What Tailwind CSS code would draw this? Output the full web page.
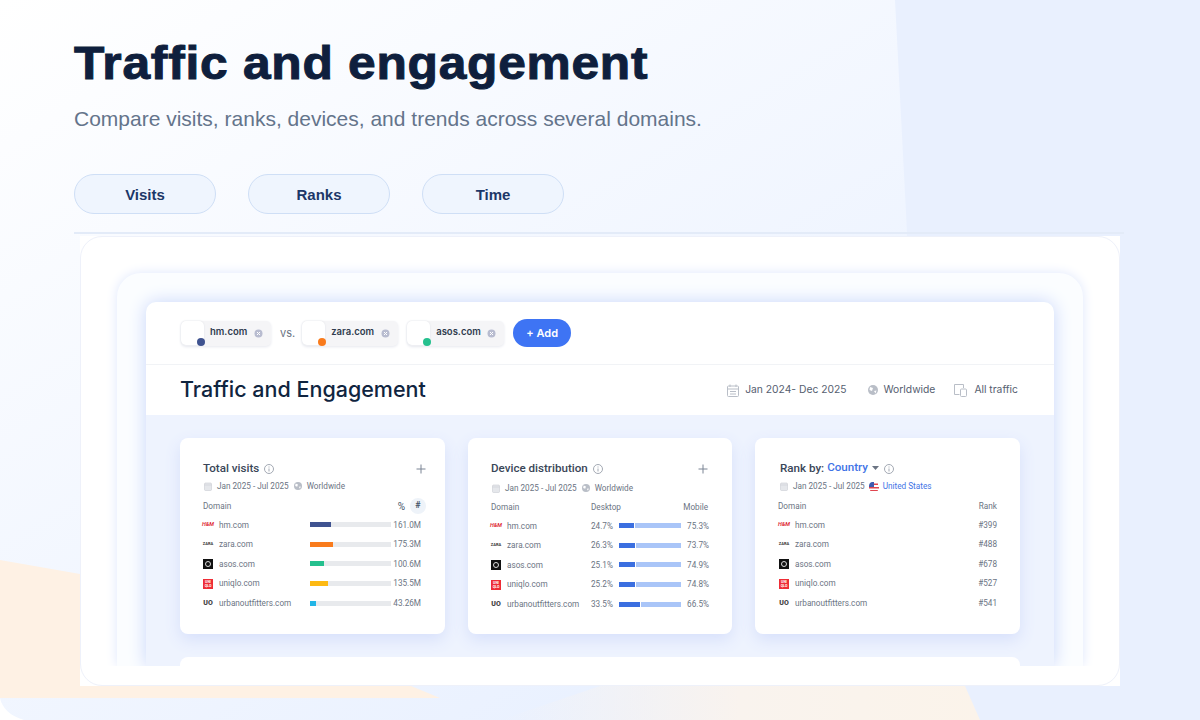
<!DOCTYPE html>
<html lang="en">
<head>
  <meta charset="UTF-8">
  <meta name="viewport" content="width=device-width, initial-scale=1.0">
  <title>Traffic and engagement</title>
  <script src="https://cdn.jsdelivr.net/npm/@tailwindcss/browser@4"></script>
</head>
<body class="relative w-[1200px] h-[720px] overflow-hidden bg-linear-to-br from-white to-[#e2ecff] font-['Roboto',sans-serif]">
  <!-- background shapes -->
  <svg class="absolute inset-0" width="1200" height="720" viewBox="0 0 1200 720">
    <defs>
      <linearGradient id="peach" x1="0" x2="1" y1="0" y2="0">
        <stop offset="0" stop-color="#f9f3ee" stop-opacity="0"/>
        <stop offset="0.5" stop-color="#f9f3ee"/>
        <stop offset="1" stop-color="#fbf3ea"/>
      </linearGradient>
    </defs>
    <path d="M895 0H1200V720H908L907 232Z" fill="#e9f0fe"/>
    <path d="M0 560L120 581L300 640L440 698H0Z" fill="#fef1e4"/>
    <path d="M600 686H965L980 720H500Z" fill="url(#peach)"/>
    <path d="M0 698V720H24C10 716 2 708 0 698Z" fill="#ffffff"/>
  </svg>

  <div class="relative pl-[74px]">
    <h1 class="w-[533px] whitespace-nowrap pt-[36px] h-[88px] origin-left scale-x-[1.08] font-['Liberation_Sans',sans-serif] font-bold text-[46px] leading-[54px] tracking-[0.7px] text-[#0f1f3d] [-webkit-text-stroke:1px_#0f1f3d]">Traffic and engagement</h1>
    <p class="mt-[17px] font-['Liberation_Sans',sans-serif] text-[21px] leading-[27px] text-[#64748b]">Compare visits, ranks, devices, and trends across several domains.</p>

    <div class="mt-[42px] flex gap-[32px]">
      <button class="w-[142px] h-[40px] pt-[2px] rounded-[20px] border border-[#cfdff6] bg-[#eff5fe] font-['Liberation_Sans',sans-serif] font-bold text-[15px] text-[#1c3768]">Visits</button>
      <button class="w-[142px] h-[40px] pt-[2px] rounded-[20px] border border-[#cfdff6] bg-[#eff5fe] font-['Liberation_Sans',sans-serif] font-bold text-[15px] text-[#1c3768]">Ranks</button>
      <button class="w-[142px] h-[40px] pt-[2px] rounded-[20px] border border-[#cfdff6] bg-[#eff5fe] font-['Liberation_Sans',sans-serif] font-bold text-[15px] text-[#1c3768]">Time</button>
    </div>

    <div class="mt-[18px] w-[1050px] h-[2px] bg-[#e3ebf8]"></div>

    <!-- screenshot frame -->
    <div class="mt-[2px] ml-[6px] w-[1040px] h-[450px] bg-white">
      <div class="w-full h-full rounded-[22px] border border-[#eef1fa] pt-[36px] px-[36px]">
        <div class="w-[966px] h-[393px] rounded-t-[24px] bg-[#fbfdff] shadow-[0_0_12px_#dfe7fc] pt-[29px] px-[29px] [clip-path:inset(-30px_-30px_0_-30px)]">
          <div class="w-[908px] h-[364px] rounded-t-[10px] overflow-hidden bg-white shadow-[0_0_18px_#c8d6fa]">

            <!-- domain bar -->
            <div class="h-[63px] border-b border-[#f1f3f6] pl-[35px] pt-[17px] flex items-start font-['Inter',sans-serif]">
              <div id="chips" class="flex items-center h-[28px]"></div>
              <button class="ml-[9px] w-[58px] h-[28px] rounded-full bg-[#3e74f4] text-white text-[11px] font-semibold">+ Add</button>
            </div>

            <!-- page title -->
            <div class="h-[50px] pl-[34px] pr-[36px] flex items-center justify-between font-['Inter',sans-serif]">
              <h2 class="pb-[2px] text-[21.5px] font-medium text-[#10253f]">Traffic and Engagement</h2>
              <div class="flex items-center text-[10.3px] text-[#566070]">
                <svg class="mr-[6px]" width="12" height="13" viewBox="0 0 12 13" fill="none" stroke="#b9bec7"><rect x="0.5" y="2" width="11" height="10.5" rx="1"/><path d="M0.5 5H11.5M3 0.5V3M9 0.5V3M3 7.5H9M3 10H9"/></svg>
                <span>Jan 2024- Dec 2025</span>
                <svg class="ml-[21px] mr-[6px]" width="10" height="10" viewBox="0 0 10 10"><circle cx="5" cy="5" r="5" fill="#b9bec7"/><path d="M2 2L5 3L4 6L1.5 5ZM6 6L8.5 5.5L7.5 8.5Z" fill="#fff"/></svg>
                <span>Worldwide</span>
                <svg class="ml-[19px] mr-[7px]" width="13" height="13" viewBox="0 0 13 13" fill="none" stroke="#b9bec7"><path d="M5.5 10.5H0.5V0.5H9.5V4"/><rect x="6.5" y="5" width="6" height="7.5" rx="1"/></svg>
                <span>All traffic</span>
              </div>
            </div>

            <!-- widgets -->
            <div class="h-[251px] bg-[#eef3fe] pl-[34px] pt-[23px]">
              <div class="flex gap-[23px]">
                <div class="w-[265px] h-[196px] rounded-[8px] bg-white shadow-[0_6px_16px_#d7e0fb] px-[23px] pt-[21px]">
                  <div class="flex items-center h-[20px] text-[11.6px] font-medium text-[#3a4658]">
                    Total visits
                    <svg class="ml-[5px]" width="10" height="10" viewBox="0 0 10 10" fill="none" stroke="#a3a9b3"><circle cx="5" cy="5" r="4.5"/><path d="M5 4.5V7.5M5 2.5V3.5"/></svg>
                    <svg class="ml-auto mr-[-4px]" width="10" height="10" viewBox="0 0 10 10" stroke="#7b8494"><path d="M5 0.5V9.5M0.5 5H9.5"/></svg>
                  </div>
                  <div class="flex items-center h-[14px] text-[8.2px] text-[#6b7483]">
                    <svg class="ml-[1px] mr-[5px]" width="8" height="9" viewBox="0 0 8 9" fill="#e5e7eb" stroke="#c9cdd4" stroke-width="0.6"><rect x="0.5" y="1" width="7" height="7.5" rx="1"/><path d="M0.5 3H7.5"/></svg>
                    <span>Jan 2025 - Jul 2025</span>
                    <svg class="ml-[5px] mr-[5px]" width="8" height="8" viewBox="0 0 10 10"><circle cx="5" cy="5" r="5" fill="#b9bec7"/><path d="M2 2L5 3L4 6L1.5 5ZM6 6L8.5 5.5L7.5 8.5Z" fill="#fff"/></svg>
                    <span>Worldwide</span>
                  </div>
                  <div class="mt-[3px] h-[20px] flex items-center text-[8.2px] text-[#6b7483]">
                    <span>Domain</span>
                    <span class="ml-auto text-[10px] text-[#475569]">%</span>
                    <span class="ml-[5px] mr-[-4px] w-[16px] h-[16px] rounded-full bg-[#eef3f9] flex items-center justify-center text-[9px] font-bold text-[#475569]">#</span>
                  </div>
                  <div id="visits" class="mt-[-1px]"></div>
                </div>

                <div class="w-[264px] h-[196px] rounded-[8px] bg-white shadow-[0_6px_16px_#d7e0fb] px-[23px] pt-[21px]">
                  <div class="flex items-center h-[20px] text-[11.6px] font-medium text-[#3a4658]">
                    Device distribution
                    <svg class="ml-[5px]" width="10" height="10" viewBox="0 0 10 10" fill="none" stroke="#a3a9b3"><circle cx="5" cy="5" r="4.5"/><path d="M5 4.5V7.5M5 2.5V3.5"/></svg>
                    <svg class="ml-auto mr-[1px]" width="10" height="10" viewBox="0 0 10 10" stroke="#7b8494"><path d="M5 0.5V9.5M0.5 5H9.5"/></svg>
                  </div>
                  <div class="mt-[2px] flex items-center h-[14px] text-[8.2px] text-[#6b7483]">
                    <svg class="ml-[1px] mr-[5px]" width="8" height="9" viewBox="0 0 8 9" fill="#e5e7eb" stroke="#c9cdd4" stroke-width="0.6"><rect x="0.5" y="1" width="7" height="7.5" rx="1"/><path d="M0.5 3H7.5"/></svg>
                    <span>Jan 2025 - Jul 2025</span>
                    <svg class="ml-[5px] mr-[5px]" width="8" height="8" viewBox="0 0 10 10"><circle cx="5" cy="5" r="5" fill="#b9bec7"/><path d="M2 2L5 3L4 6L1.5 5ZM6 6L8.5 5.5L7.5 8.5Z" fill="#fff"/></svg>
                    <span>Worldwide</span>
                  </div>
                  <div class="mt-[2px] h-[20px] flex items-center text-[8.2px] text-[#6b7483]">
                    <span class="w-[100px]">Domain</span>
                    <span>Desktop</span>
                    <span class="ml-auto mr-[1px]">Mobile</span>
                  </div>
                  <div id="devices" class="mt-[-1px]"></div>
                </div>

                <div class="w-[265px] h-[196px] rounded-[8px] bg-white shadow-[0_6px_16px_#d7e0fb] px-[24px] pt-[21px]">
                  <div class="ml-[1px] flex items-center h-[20px] text-[11.6px] font-medium text-[#3a4658]">
                    <span>Rank by:</span>
                    <span class="ml-[3px] mt-[-3px] text-[#3f74e6]">Country</span>
                    <svg class="ml-[4px] mt-[-3px]" width="7" height="4" viewBox="0 0 7 4" fill="#6b7483"><path d="M0 0H7L3.5 4Z"/></svg>
                    <svg class="ml-[5px]" width="10" height="10" viewBox="0 0 10 10" fill="none" stroke="#a3a9b3"><circle cx="5" cy="5" r="4.5"/><path d="M5 4.5V7.5M5 2.5V3.5"/></svg>
                  </div>
                  <div class="mt-[1px] flex items-center h-[13px] text-[8.2px] text-[#6b7483]">
                    <svg class="ml-[1px] mr-[5px]" width="8" height="9" viewBox="0 0 8 9" fill="#e5e7eb" stroke="#c9cdd4" stroke-width="0.6"><rect x="0.5" y="1" width="7" height="7.5" rx="1"/><path d="M0.5 3H7.5"/></svg>
                    <span>Jan 2025 - Jul 2025</span>
                    <svg class="ml-[4px] mr-[4px]" width="10" height="10" viewBox="0 0 10 10"><circle cx="5" cy="5" r="5" fill="#fff"/><path d="M1 1.5H9V3H1ZM0 5H10V6.5H0ZM1.2 8H8.8V9H1.2Z" fill="#e0454f"/><path d="M0 5V3.5A4 4 0 0 1 5 0V5Z" fill="#3d5bb0"/></svg>
                    <span class="text-[#3f74e6]">United States</span>
                  </div>
                  <div class="mt-[3px] h-[20px] flex items-center justify-between text-[8.2px] text-[#6b7483]">
                    <span class="ml-[-1px]">Domain</span>
                    <span class="mr-[-1px]">Rank</span>
                  </div>
                  <div id="ranks" class="mt-[-1px]"></div>
                </div>
              </div>
              <div class="mt-[23px] w-[840px] h-[40px] rounded-[8px] bg-white"></div>
            </div>
          </div>
        </div>
      </div>
    </div>
  </div>

  <script>
    const logos = {
      hm: '<span class="w-[10px] shrink-0 flex justify-center font-[\'Liberation_Serif\',serif] italic font-bold text-[5.5px] leading-none text-[#e0313c]">H&amp;M</span>',
      zara: '<span class="w-[10px] shrink-0 flex justify-center font-[\'Liberation_Serif\',serif] font-bold text-[4px] leading-none text-[#333]">ZARA</span>',
      asos: '<span class="w-[10px] h-[10px] shrink-0 bg-[#111] flex items-center justify-center"><span class="w-[6px] h-[6px] rounded-full border-[1.5px] border-[#ddd]"></span></span>',
      uniqlo: '<span class="w-[10px] h-[10px] shrink-0 bg-[#ee2d36] flex items-center justify-center text-center font-bold text-[3.5px] leading-[4px] text-white">UNI<br>QLO</span>',
      uo: '<span class="w-[10px] shrink-0 flex justify-center font-black text-[7px] leading-none text-[#444]">UO</span>'
    };

    const rows = [
      { key: "hm", domain: "hm.com", visits: "161.0M", fill: 21, color: "bg-[#3f5390]", desktop: 24.7, mobile: 75.3, rank: "#399" },
      { key: "zara", domain: "zara.com", visits: "175.3M", fill: 23, color: "bg-[#f97b1c]", desktop: 26.3, mobile: 73.7, rank: "#488" },
      { key: "asos", domain: "asos.com", visits: "100.6M", fill: 13.5, color: "bg-[#25c08e]", desktop: 25.1, mobile: 74.9, rank: "#678" },
      { key: "uniqlo", domain: "uniqlo.com", visits: "135.5M", fill: 18, color: "bg-[#fdb913]", desktop: 25.2, mobile: 74.8, rank: "#527" },
      { key: "uo", domain: "urbanoutfitters.com", visits: "43.26M", fill: 6, color: "bg-[#22b5e6]", desktop: 33.5, mobile: 66.5, rank: "#541" }
    ];

    // domain chips in the top bar
    document.getElementById("chips").innerHTML = [
      { name: "hm.com", dot: "bg-[#3f5390]", width: "w-[90px]" },
      { name: "zara.com", dot: "bg-[#f97b1c]", width: "w-[96px]" },
      { name: "asos.com", dot: "bg-[#25c08e]", width: "w-[97px]" }
    ].map((chip, i) => `
      ${i === 1 ? '<span class="ml-[9px] mr-[7px] text-[11px] text-[#6b7483]">vs.</span>' : ""}
      <div class="relative ${chip.width} h-[25px] ${i === 2 ? "ml-[9px]" : ""} rounded-[5px] bg-[#f5f5f7] shadow-[0_1px_3px_#e6e8ef] flex items-center">
        <span class="w-[23px] h-[24px] rounded-[5px] bg-white shadow-[0_0_2px_#dde0e6]"></span>
        <span class="ml-[6px] mt-[-2px] text-[9.5px] font-semibold text-[#2f3b4e]">${chip.name}</span>
        <svg class="ml-auto mr-[8px]" width="9" height="9" viewBox="0 0 9 9"><circle cx="4.5" cy="4.5" r="4" fill="#b8bcd0"/><path d="M3 3L6 6M6 3L3 6" stroke="#fff"/></svg>
        <span class="absolute left-[16px] top-[17px] w-[8px] h-[8px] rounded-full ${chip.dot}"></span>
      </div>`).join("");

    document.getElementById("visits").innerHTML = rows.map(r => `
      <div class="h-[19.6px] flex items-center text-[8.2px] text-[#6b7483]">
        ${logos[r.key]}
        <span class="ml-[6px] w-[91px] shrink-0">${r.domain}</span>
        <span class="w-[81px] h-[5px] shrink-0 bg-[#e8eaed] block"><span class="block h-full ${r.color}" style="width:${r.fill}px"></span></span>
        <span class="ml-auto mr-[1px]">${r.visits}</span>
      </div>`).join("");

    document.getElementById("devices").innerHTML = rows.map(r => `
      <div class="h-[19.6px] flex items-center text-[8.2px] text-[#6b7483]">
        ${logos[r.key]}
        <span class="ml-[6px] w-[84px] shrink-0">${r.domain}</span>
        <span class="w-[28px] shrink-0">${r.desktop}%</span>
        <span class="w-[62px] h-[5px] shrink-0 flex gap-[1px]"><span class="h-full bg-[#3b6fe0]" style="width:${r.desktop}%"></span><span class="h-full flex-1 bg-[#a9c5f8]"></span></span>
        <span class="ml-auto">${r.mobile}%</span>
      </div>`).join("");

    document.getElementById("ranks").innerHTML = rows.map(r => `
      <div class="h-[19.6px] flex items-center text-[8.2px] text-[#6b7483]">
        ${logos[r.key]}
        <span class="ml-[6px]">${r.domain}</span>
        <span class="ml-auto mr-[-1px]">${r.rank}</span>
      </div>`).join("");
  </script>
</body>
</html>
